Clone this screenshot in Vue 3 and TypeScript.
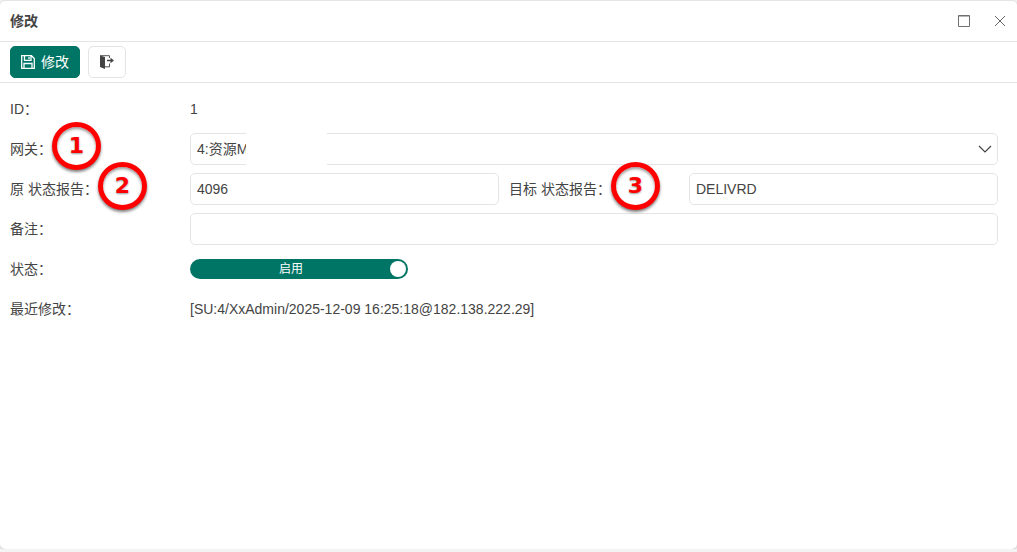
<script setup lang="ts">
import { ref } from 'vue'

const gateway = ref('4:资源M')
const sourceReport = ref('4096')
const targetReport = ref('DELIVRD')
const remark = ref('')
const enabled = ref(true)
</script>

<template>
  <main class="dialog" lang="zh-CN">
    <header class="titlebar">
      <h1>修改</h1>
      <div class="window-tools">
        <button type="button" aria-label="最大化">
          <svg width="12" height="12" viewBox="0 0 12 12" fill="none" stroke="#707070">
            <path d="M.5 .5h11v11H.5zM.5 1h11" />
          </svg>
        </button>
        <button type="button" aria-label="关闭">
          <svg width="12" height="12" viewBox="0 0 12 12" fill="none" stroke="#666">
            <path d="M1 1l10 10M11 1L1 11" />
          </svg>
        </button>
      </div>
    </header>

    <div class="toolbar">
      <button type="submit" form="edit-form" class="btn primary">
        <svg width="14" height="14" viewBox="0 0 14 14" fill="none" stroke="currentColor" stroke-width="1.3">
          <path d="M.7 .7h9.800l2.800 2.800v9.800H.7zM3.500 .7v4.600h6.500V.7M3 13.300V8.500h8v4.800" />
          <path d="M8 2v2.200" />
        </svg>
        <span>修改</span>
      </button>
      <button type="button" class="btn" aria-label="退出">
        <svg width="14" height="14" viewBox="0 0 14 14">
          <path d="M0 .5l5 1.500v12L0 12z" fill="#444" />
          <path d="M0 .7h9.500V3M9.500 8.500v3.300H5" fill="none" stroke="#555" />
          <path d="M7 5.500h5" fill="none" stroke="#444" stroke-width="1.400" />
          <path d="M10.500 2.700l3.500 2.800-3.500 2.800z" fill="#444" />
        </svg>
      </button>
    </div>

    <form id="edit-form" class="form" @submit.prevent>
      <div class="row">
        <span class="label">ID：</span>
        <span>1</span>
      </div>
      <div class="row">
        <label class="label" for="gateway"><span class="caption">网关：<b class="badge">1</b></span></label>
        <div class="select-box">
          <select id="gateway" v-model="gateway">
            <option value="4:资源M">4:资源M</option>
          </select>
          <svg class="chevron" width="14" height="8" viewBox="0 0 14 8" fill="none" stroke="#444" stroke-width="1.200">
            <path d="M1 1l6 6 6-6" />
          </svg>
          <i class="mask"></i>
        </div>
      </div>
      <div class="row pair">
        <label class="label" for="source"><span class="caption">原 状态报告：<b class="badge">2</b></span></label>
        <input id="source" v-model="sourceReport" class="field" type="text" />
        <label class="label second" for="target"><span class="caption">目标 状态报告：<b class="badge">3</b></span></label>
        <input id="target" v-model="targetReport" class="field" type="text" />
      </div>
      <div class="row">
        <label class="label" for="remark">备注：</label>
        <input id="remark" v-model="remark" class="field" type="text" />
      </div>
      <div class="row">
        <label class="label" for="status">状态：</label>
        <label class="switch" :class="{ off: !enabled }">
          <input id="status" v-model="enabled" type="checkbox" role="switch" />
          <span class="state">{{ enabled ? '启用' : '停用' }}</span>
          <span class="knob"></span>
        </label>
      </div>
      <div class="row">
        <span class="label">最近修改：</span>
        <span>[SU:4/XxAdmin/2025-12-09 16:25:18@182.138.222.29]</span>
      </div>
    </form>
  </main>
</template>

<style>
body {
  background: #f3f3f3;
}
</style>

<style scoped>
* {
  box-sizing: border-box;
}
.dialog {
  display: flex;
  flex-direction: column;
  min-height: calc(100vh - 3px);
  overflow: hidden;
  border-top: 1px solid #e4e4e4;
  border-radius: 5px;
  background: #fff;
  box-shadow: 0 1px 2px rgba(0, 0, 0, 0.2);
  color: #444;
  font: 14px/20px "Liberation Sans", "Noto Sans CJK SC", sans-serif;
}
button,
input,
select {
  color: inherit;
  font: inherit;
}
.titlebar {
  display: flex;
  align-items: center;
  justify-content: space-between;
  height: 41px;
  padding: 0 10px;
  border-bottom: 1px solid #e4e4e4;
}
h1 {
  margin: 0;
  font-size: 14px;
  font-weight: 700;
}
.window-tools {
  display: flex;
  gap: 24px;
}
.window-tools button {
  display: flex;
  padding: 0;
  border: 0;
  background: none;
}
.window-tools button:last-child {
  margin-right: 1px;
}
.toolbar {
  display: flex;
  align-items: center;
  gap: 8px;
  height: 41px;
  padding: 0 10px;
  border-bottom: 1px solid #e4e4e4;
}
.btn {
  display: flex;
  align-items: center;
  justify-content: center;
  gap: 6px;
  height: 32px;
  padding: 0 11px;
  border: 1px solid #e4e4e4;
  border-radius: 5px;
  background: #fff;
}
.btn.primary {
  padding: 0 10px;
  border-color: #007565;
  background: #007565;
  color: #fff;
}
.form {
  padding: 6px 19px 0 10px;
}
.row {
  display: grid;
  grid-template-columns: 180px 1fr;
  align-items: center;
  height: 40px;
}
.row.pair {
  grid-template-columns: 180px 1fr 190px 1fr;
}
.second {
  padding-left: 10px;
}
.caption {
  position: relative;
  display: inline-block;
  white-space: nowrap;
}
.badge {
  position: absolute;
  left: 100%;
  top: -17px;
  z-index: 1;
  width: 49px;
  height: 48px;
  border: 5px solid #f00;
  border-radius: 50%;
  background: #fff;
  box-shadow: 0 2px 3px rgba(0, 0, 0, 0.5), inset 0 2px 3px rgba(0, 0, 0, 0.4);
  color: #f00;
  font: 700 22px/38px "DejaVu Sans", sans-serif;
  text-align: center;
  text-shadow: 0 1px 2px rgba(0, 0, 0, 0.4);
}
.field,
select {
  display: block;
  width: 100%;
  min-width: 0;
  height: 32px;
  padding: 0 6px;
  border: 1px solid #e4e4e4;
  border-radius: 5px;
  outline: 0;
  background: #fff;
}
.select-box {
  position: relative;
}
select {
  appearance: none;
}
.chevron {
  position: absolute;
  top: 12px;
  right: 6px;
  pointer-events: none;
}
.mask {
  position: absolute;
  top: 0;
  left: 56px;
  width: 81px;
  height: 32px;
  background: #fff;
}
.switch {
  position: relative;
  display: flex;
  align-items: center;
  width: 218px;
  height: 20px;
  padding: 0 2px;
  border-radius: 10px;
  background: #007565;
  color: #fff;
  font-size: 12px;
}
.switch input {
  position: absolute;
  inset: 0;
  width: 100%;
  height: 100%;
  margin: 0;
  opacity: 0;
}
.state {
  flex: 1;
  text-align: center;
}
.knob {
  width: 16px;
  height: 16px;
  border-radius: 50%;
  background: #fff;
}
.switch.off {
  flex-direction: row-reverse;
  background: #aaa;
}
</style>
